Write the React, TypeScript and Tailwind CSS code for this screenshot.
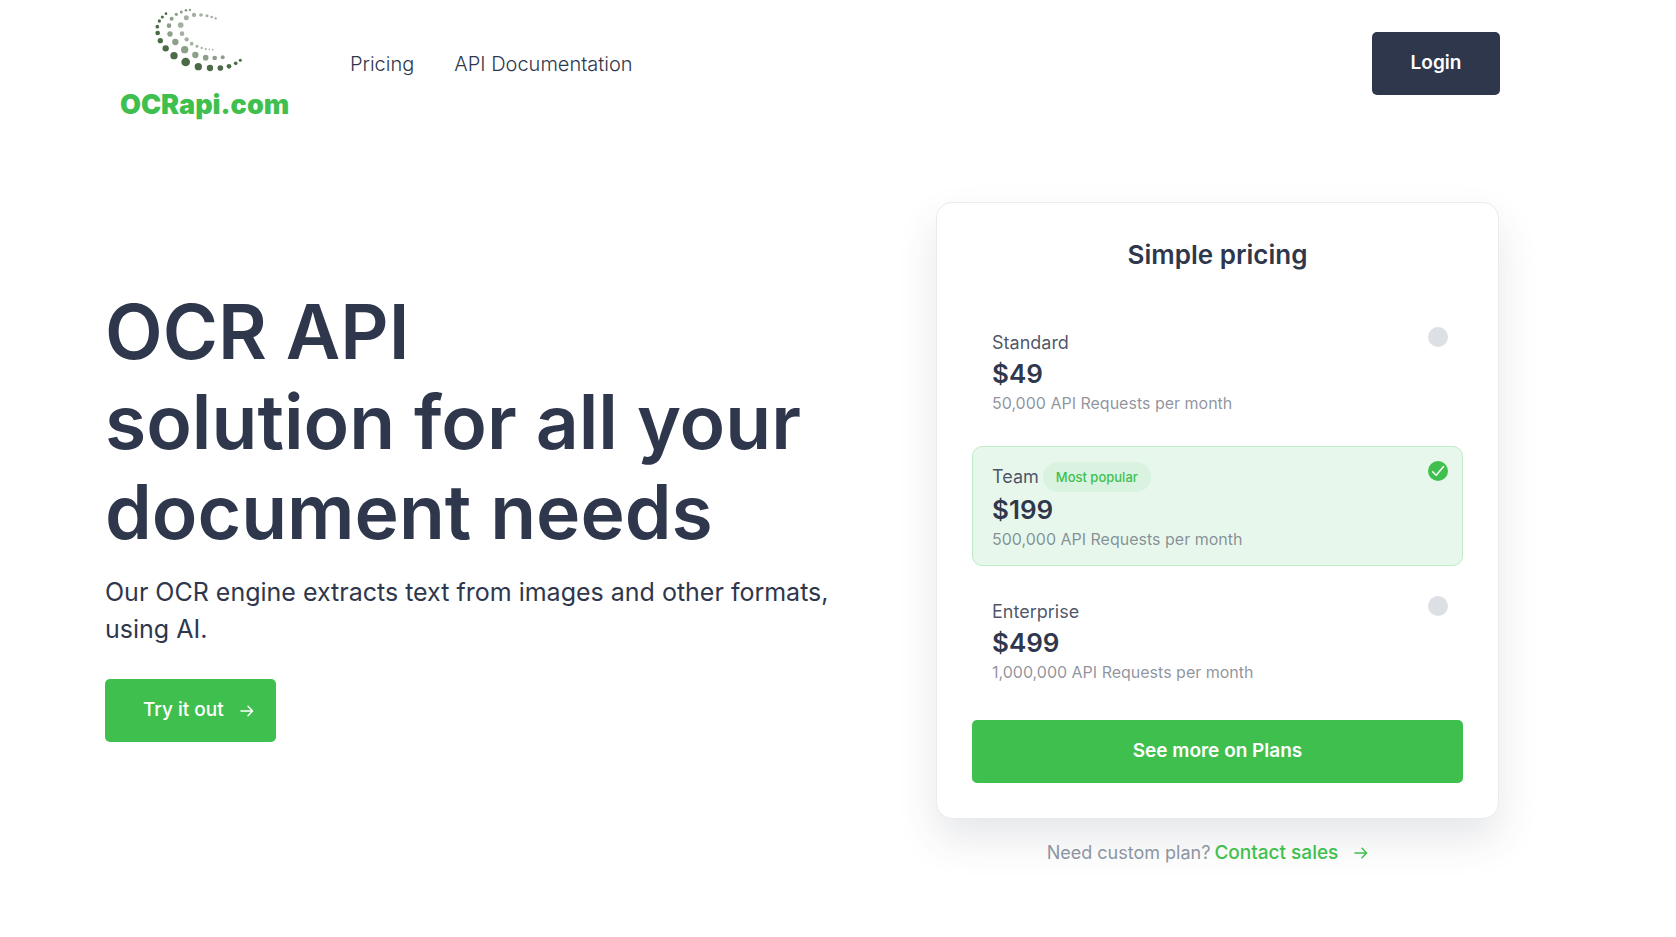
import { useState } from 'react';
import clsx from 'clsx';

interface Plan {
  id: string;
  name: string;
  price: string;
  requests: string;
  badge?: string;
}

const plans: Plan[] = [
  { id: 'standard', name: 'Standard', price: '$49', requests: '50,000' },
  { id: 'team', name: 'Team', price: '$199', requests: '500,000', badge: 'Most popular' },
  { id: 'enterprise', name: 'Enterprise', price: '$499', requests: '1,000,000' },
];

// [cx, cy, r] for the three arcs of the logo
const outerDots = [
  [198, 41, 4], [187, 51, 4.5], [178, 63, 5], [172, 80, 5.5], [173, 99, 7], [181, 122, 8],
  [197, 145, 9.5], [222, 167, 11], [257, 186, 13], [295, 200, 11], [330, 204, 9.5],
  [361, 204, 8.5], [387, 199, 7], [407, 190, 5.5], [421, 181, 4.5],
];
const middleDots = [
  [270, 30, 3.5], [258, 31, 4], [244, 36, 4.5], [229, 43, 5], [215, 56, 6], [207, 77, 7],
  [210, 102, 8], [226, 126, 9.5], [254, 149, 11], [286, 165, 9.5], [317, 173, 8.5],
  [344, 174, 7], [368, 172, 6],
];
const innerDots = [
  [347, 55, 3.5], [335, 51, 4], [321, 47, 4.5], [303, 45, 5.5], [282, 45, 6.5], [259, 53, 7.5],
  [242, 75, 8.5], [246, 101, 7], [260, 118, 6.5], [275, 131, 5.5], [291, 139, 4.5],
  [305, 144, 3.5], [317, 147, 3], [328, 148, 2.5], [338, 149, 2.5],
];

const Dots = ({ dots, fill }: { dots: number[][]; fill: string }) => (
  <g fill={fill}>
    {dots.map(([cx, cy, r]) => (
      <circle key={`${cx}-${cy}`} cx={cx} cy={cy} r={r} />
    ))}
  </g>
);

const Logo = () => (
  <a href="#" className="flex w-[200px] flex-col px-[15px]">
    <svg viewBox="150 21 288 198" className="ml-[30px] h-[66px] w-24" aria-hidden="true">
      <Dots dots={outerDots} fill="#4b6b47" />
      <Dots dots={middleDots} fill="#8c9f89" />
      <Dots dots={innerDots} fill="#a3b1a0" />
    </svg>
    <span className="mt-4 text-[27px] leading-8 font-black whitespace-nowrap text-[#3fc04e]">
      OCRapi.com
    </span>
  </a>
);

const ArrowRight = () => (
  <svg
    viewBox="0 0 14 12"
    className="h-3 w-3.5"
    fill="none"
    stroke="currentColor"
    strokeWidth="1.5"
    strokeLinecap="round"
    strokeLinejoin="round"
    aria-hidden="true"
  >
    <path d="M1 6h11.5M8 1.2 12.6 6 8 10.8" />
  </svg>
);

const Header = () => (
  <header className="flex h-[127px] items-center">
    <Logo />
    <nav className="ml-[45px] flex flex-1 gap-10 text-xl font-light">
      <a href="#pricing">Pricing</a>
      <a href="#docs">API Documentation</a>
    </nav>
    <button
      type="button"
      className="h-[63px] w-32 rounded-[5px] bg-[#2f374c] text-[19px] font-semibold text-white"
    >
      Login
    </button>
  </header>
);

interface PlanOptionProps {
  plan: Plan;
  selected: boolean;
  onSelect: () => void;
}

const PlanOption = ({ plan, selected, onSelect }: PlanOptionProps) => (
  <label
    htmlFor={plan.id}
    className={clsx(
      'flex cursor-pointer items-start justify-between rounded-[10px] border px-[19px] pt-3.5',
      selected ? 'h-[120px] border-[#bfebc8] bg-[#e8f7ec]' : 'h-[119px] border-transparent',
    )}
  >
    <span className="flex flex-col">
      <span
        className={clsx(
          'flex items-center gap-1 text-lg text-[#2f374c]/85',
          plan.badge ? 'h-8' : 'h-[30px] pt-0.5',
        )}
      >
        {plan.name}
        {plan.badge && (
          <span className="flex h-[30px] items-center rounded-full bg-[#d9f3e0] px-[13px] text-[13px] font-medium text-[#3fc04e]">
            {plan.badge}
          </span>
        )}
      </span>
      <span className="text-[26px] leading-[34px] font-semibold">{plan.price}</span>
      <span className="text-base leading-[25px] text-[#2f374c]/55">
        {plan.requests} API Requests per month
      </span>
    </span>
    <span className="-mr-[5px] grid size-5 place-items-center text-white">
      <input
        id={plan.id}
        type="radio"
        name="plan"
        checked={selected}
        onChange={onSelect}
        className="col-start-1 row-start-1 size-5 appearance-none rounded-full bg-[#dcdfe4] checked:bg-[#3fc04e]"
      />
      {selected && (
        <svg
          viewBox="0 0 20 20"
          className="pointer-events-none col-start-1 row-start-1 size-5"
          fill="none"
          stroke="currentColor"
          strokeWidth="1.5"
          strokeLinecap="round"
          strokeLinejoin="round"
          aria-hidden="true"
        >
          <path d="M4.6 10.8 8.2 14.2 15.6 5.6" />
        </svg>
      )}
    </span>
  </label>
);

const PricingCard = () => {
  const [selected, setSelected] = useState('team');

  return (
    <section className="mr-px w-[563px] shrink-0">
      <div className="rounded-2xl border border-[#e9ebef] bg-white px-[35px] pt-[34px] pb-[35px] shadow-[0_20px_40px_rgba(47,55,76,0.12)]">
        <h2 className="text-center text-[26px] leading-9 font-semibold">Simple pricing</h2>
        <div className="mt-[39px] flex flex-col gap-[15px]">
          {plans.map((plan) => (
            <PlanOption
              key={plan.id}
              plan={plan}
              selected={selected === plan.id}
              onSelect={() => setSelected(plan.id)}
            />
          ))}
        </div>
        <button
          type="button"
          className="mt-5 h-[63px] w-full rounded-[5px] bg-[#3fc04e] text-[19px] font-semibold text-white"
        >
          See more on Plans
        </button>
      </div>
      <p className="mt-[19px] flex items-center justify-center gap-1 pr-5 text-lg text-[#8c95a1]">
        Need custom plan?
        <a href="#contact" className="flex items-center gap-4 text-[19px] font-medium text-[#3fc04e]">
          Contact sales
          <ArrowRight />
        </a>
      </p>
    </section>
  );
};

const Hero = () => (
  <section className="max-w-[740px] pt-[85px]">
    <h1 className="text-[75px] leading-[90px] font-semibold">
      OCR API
      <br />
      solution for all your document needs
    </h1>
    <p className="mt-[17px] text-[25px] leading-[37px] font-normal">
      Our OCR engine extracts text from images and other formats, using AI.
    </p>
    <button
      type="button"
      className="mt-[31px] flex h-[63px] items-center gap-4 rounded-[5px] bg-[#3fc04e] pr-[22px] pl-[38px] text-[19px] font-medium text-white"
    >
      Try it out
      <ArrowRight />
    </button>
  </section>
);

const App = () => (
  <div className="min-h-screen bg-white pr-44 pl-[105px] font-['Inter','Liberation_Sans',sans-serif] text-[#2f374c]">
    <Header />
    <main className="flex items-start justify-between gap-8 pt-[75px] pb-16">
      <Hero />
      <PricingCard />
    </main>
  </div>
);

export default App;
